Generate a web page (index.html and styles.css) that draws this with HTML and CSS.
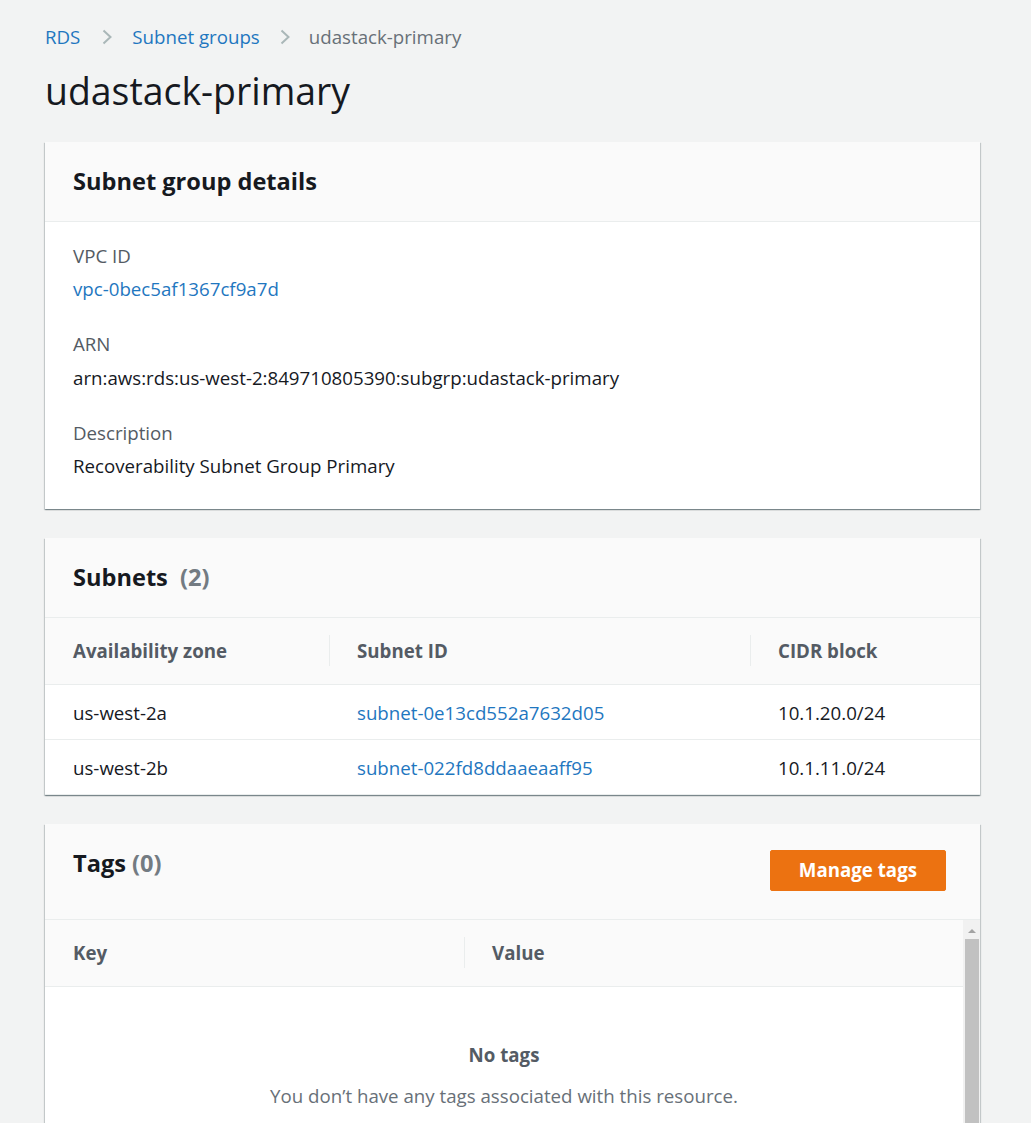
FILE: index.html
```html
<!DOCTYPE html>
<html lang="en">
<head>
<meta charset="utf-8">
<title>udastack-primary</title>
<link rel="stylesheet" href="styles.css">
</head>
<body>
<div class="page">
  <nav class="crumbs">
    <a class="crumb-link" href="#">RDS</a>
    <svg class="crumb-sep" viewBox="0 0 12 16" aria-hidden="true"><path d="M2.5 1.5 L9.5 8 L2.5 14.5"/></svg>
    <a class="crumb-link" href="#">Subnet groups</a>
    <svg class="crumb-sep crumb-sep-2" viewBox="0 0 12 16" aria-hidden="true"><path d="M2.5 1.5 L9.5 8 L2.5 14.5"/></svg>
    <span class="crumb-current">udastack-primary</span>
  </nav>

  <h1 class="page-title">udastack-primary</h1>

  <section class="card">
    <div class="card-header">
      <h2 class="card-title">Subnet group details</h2>
    </div>
    <div class="kv">
      <div class="kv-item">
        <div class="kv-label">VPC ID</div>
        <div class="kv-value"><a class="link" href="#">vpc-0bec5af1367cf9a7d</a></div>
      </div>
      <div class="kv-item">
        <div class="kv-label">ARN</div>
        <div class="kv-value">arn:aws:rds:us-west-2:849710805390:subgrp:udastack-primary</div>
      </div>
      <div class="kv-item">
        <div class="kv-label">Description</div>
        <div class="kv-value">Recoverability Subnet Group Primary</div>
      </div>
    </div>
  </section>

  <section class="card">
    <div class="card-header">
      <h2 class="card-title">Subnets&nbsp; <span class="counter">(2)</span></h2>
    </div>
    <table class="table subnets-table">
      <colgroup><col class="col-az"><col class="col-id"><col></colgroup>
      <thead>
        <tr><th>Availability zone</th><th class="th-sep">Subnet ID</th><th class="th-sep">CIDR block</th></tr>
      </thead>
      <tbody>
        <tr><td>us-west-2a</td><td><a class="link" href="#">subnet-0e13cd552a7632d05</a></td><td>10.1.20.0/24</td></tr>
        <tr><td>us-west-2b</td><td><a class="link" href="#">subnet-022fd8ddaaeaaff95</a></td><td>10.1.11.0/24</td></tr>
      </tbody>
    </table>
  </section>

  <section class="card">
    <div class="card-header card-header-actions">
      <h2 class="card-title">Tags <span class="counter">(0)</span></h2>
      <button class="btn-primary" type="button">Manage tags</button>
    </div>
    <div class="scroll-area">
      <div class="scroll-content">
        <table class="table tags-table">
          <colgroup><col class="col-key"><col></colgroup>
          <thead>
            <tr><th>Key</th><th class="th-sep">Value</th></tr>
          </thead>
        </table>
        <div class="empty">
          <div class="empty-title">No tags</div>
          <div class="empty-desc">You don’t have any tags associated with this resource.</div>
        </div>
      </div>
      <div class="scrollbar" aria-hidden="true">
        <div class="scroll-arrow"><span class="scroll-tri"></span></div>
        <div class="scroll-thumb"></div>
      </div>
    </div>
  </section>
</div>
</body>
</html>
```

FILE: styles.css
```css
* { box-sizing: border-box; }

html, body { margin: 0; padding: 0; }

body {
  background: #f2f3f3;
  font-family: "Open Sans", "Noto Sans", "DejaVu Sans", sans-serif;
  font-size: 18.7px;
  line-height: 26.7px;
  color: #16191f;
  overflow: hidden;
}

.page { padding: 25px 51px 0 45px; }

.crumbs {
  display: flex;
  align-items: center;
  height: 24px;
  line-height: 24px;
}
.crumb-link { color: #1f77c0; text-decoration: none; }
.crumb-current { color: #687078; }
.crumb-sep {
  flex: none;
  width: 12px;
  height: 16px;
  margin: 0 19px 0 21px;
  fill: none;
  stroke: #aab7b8;
  stroke-width: 2;
}
.crumb-sep-2 { margin: 0 18px 0 19px; }

.page-title {
  margin: 17.7px 0 27.3px;
  font-size: 37.4px;
  line-height: 48px;
  font-weight: 400;
  color: #16191f;
}

.card {
  background: #fff;
  margin-bottom: 29px;
  box-shadow: 0 1px 1px 0 rgba(0, 28, 36, .3), 1px 1px 1px 0 rgba(0, 28, 36, .15), -1px 1px 1px 0 rgba(0, 28, 36, .15);
}

.card-header {
  background: #fafafa;
  border-bottom: 1px solid #eaeded;
  padding: 25px 28px;
}
.card-header-actions {
  display: flex;
  justify-content: space-between;
  align-items: flex-start;
  padding: 25px 34px 28px 28px;
}
.card-title {
  margin: 0;
  font-size: 23.6px;
  line-height: 29.4px;
  font-weight: 700;
  color: #16191f;
}
.counter { color: #737b82; font-weight: 700; }

.btn-primary {
  margin-top: 1px;
  height: 41px;
  padding: 0 28px;
  background: #ec7211;
  border: 1px solid #ec7211;
  border-radius: 2px;
  color: #fff;
  font-family: inherit;
  font-size: 18.7px;
  font-weight: 700;
  line-height: 26.7px;
  cursor: pointer;
}

.link { color: #1f77c0; text-decoration: none; }

.kv {
  display: flex;
  flex-direction: column;
  gap: 28.3px;
  padding: 20.7px 28px 28.7px;
}
.kv-label { color: #545b64; }
.kv-value { margin-top: 6.7px; color: #16191f; }

.table {
  width: 100%;
  border-collapse: collapse;
  table-layout: fixed;
}
.table th {
  position: relative;
  text-align: left;
  background: #fafafa;
  color: #545b64;
  font-weight: 700;
  padding: 19.5px 28px 19.8px;
  border-bottom: 1px solid #eaeded;
}
.table th.th-sep::before {
  content: "";
  position: absolute;
  left: 0;
  top: 50%;
  width: 1px;
  height: 31px;
  margin-top: -16px;
  background: #eaeded;
}
.table td {
  padding: 15px 28px 12.3px;
  border-bottom: 1px solid #eaeded;
  color: #16191f;
}
.col-az { width: 284px; }
.col-id { width: 421px; }
.col-key { width: 419px; }

.scroll-area { display: flex; }
.scroll-content { flex: 1; min-width: 0; }

.empty {
  text-align: center;
  padding: 55px 28px 80px;
}
.empty-title { font-weight: 700; color: #545b64; }
.empty-desc { margin-top: 13.9px; color: #687078; }

.scrollbar {
  flex: none;
  width: 17px;
  background: #f1f1f1;
  display: flex;
  flex-direction: column;
}
.scroll-arrow {
  height: 19px;
  padding-top: 3px;
  display: flex;
  justify-content: center;
  align-items: center;
}
.scroll-tri {
  width: 0;
  height: 0;
  border-left: 4px solid transparent;
  border-right: 4px solid transparent;
  border-bottom: 4px solid #a3a3a3;
}
.scroll-thumb {
  flex: 1;
  margin: 0 1.5px;
  background: #c1c1c1;
}
```
